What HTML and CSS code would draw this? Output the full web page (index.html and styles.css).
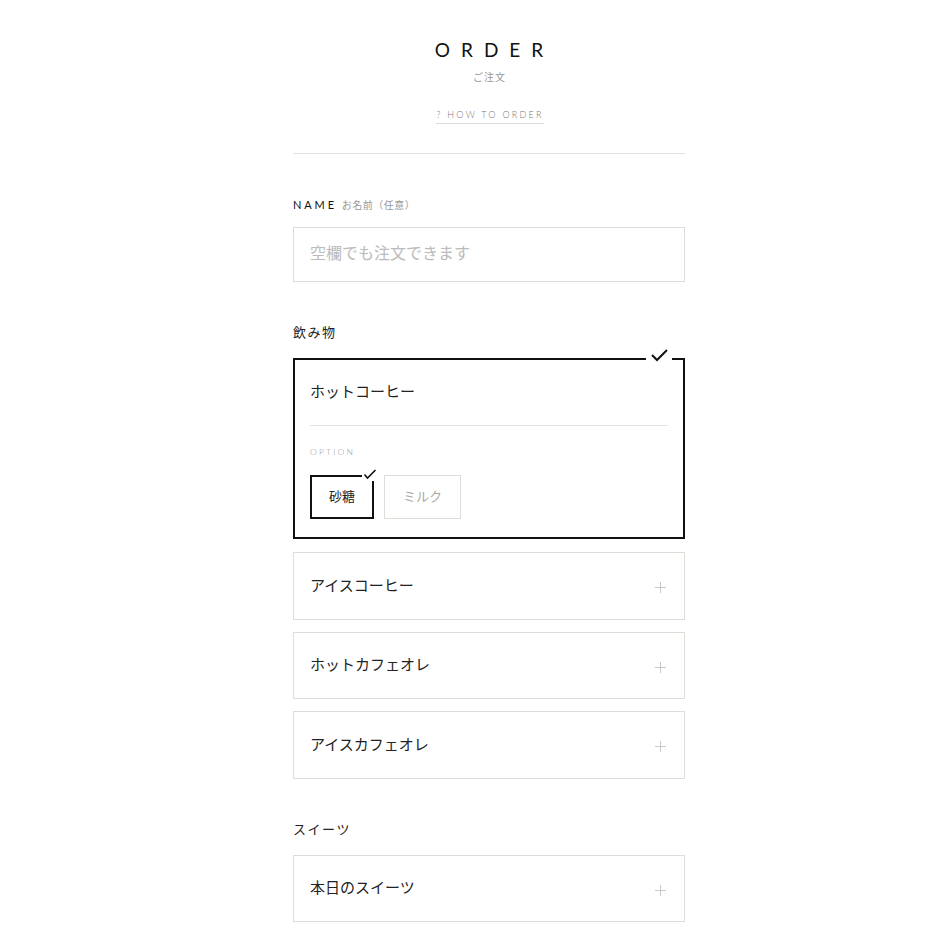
FILE: index.html
```html
<!DOCTYPE html>
<html lang="ja">
<head>
<meta charset="utf-8">
<title>ORDER</title>
<link rel="stylesheet" href="styles.css">
</head>
<body>
<main class="page">
  <header class="head">
    <h1 class="title">ORDER</h1>
    <p class="subtitle">ご注文</p>
    <a class="howto" href="#">? HOW TO ORDER</a>
  </header>
  <hr class="rule">

  <section class="field">
    <div class="label"><span class="label-en">NAME</span><span class="label-ja">お名前（任意）</span></div>
    <input class="input" type="text" placeholder="空欄でも注文できます">
  </section>

  <section class="group">
    <h2 class="group-title">飲み物</h2>
    <div class="card card-selected">
      <span class="card-check"><svg width="18" height="14" viewBox="0 0 18 14"><polyline points="2,7 7,12 17,2" fill="none" stroke="#111" stroke-width="2"/></svg></span>
      <div class="card-name">ホットコーヒー</div>
      <div class="card-divider"></div>
      <div class="option-label">OPTION</div>
      <div class="options">
        <button class="opt opt-on">砂糖<span class="opt-check"><svg width="14" height="11" viewBox="0 0 14 11"><polyline points="1.5,5.5 4.5,9 12.5,1" fill="none" stroke="#111" stroke-width="1.6"/></svg></span></button>
        <button class="opt">ミルク</button>
      </div>
    </div>
    <div class="card"><span class="card-name">アイスコーヒー</span><svg class="plus" width="11" height="11" viewBox="0 0 11 11"><path d="M5.5 0V11M0 5.5H11" stroke="#c8c8c8" stroke-width="1"/></svg></div>
    <div class="card"><span class="card-name">ホットカフェオレ</span><svg class="plus" width="11" height="11" viewBox="0 0 11 11"><path d="M5.5 0V11M0 5.5H11" stroke="#c8c8c8" stroke-width="1"/></svg></div>
    <div class="card"><span class="card-name">アイスカフェオレ</span><svg class="plus" width="11" height="11" viewBox="0 0 11 11"><path d="M5.5 0V11M0 5.5H11" stroke="#c8c8c8" stroke-width="1"/></svg></div>
  </section>

  <section class="group">
    <h2 class="group-title">スイーツ</h2>
    <div class="card"><span class="card-name">本日のスイーツ</span><svg class="plus" width="11" height="11" viewBox="0 0 11 11"><path d="M5.5 0V11M0 5.5H11" stroke="#c8c8c8" stroke-width="1"/></svg></div>
  </section>
</main>
</body>
</html>
```
FILE: styles.css
```css
* { box-sizing: border-box; }
html, body { margin: 0; background: #fff; }
body {
  padding-left: 51px;
  font-family: "Lato", "Noto Sans CJK JP", sans-serif;
  color: #222;
}
.page {
  width: 392px;
  margin: 0 auto;
  padding-top: 40px;
}
.head {
  display: flex;
  flex-direction: column;
  align-items: center;
}
.title {
  margin: 0;
  font-size: 19px;
  line-height: 20px;
  font-weight: 400;
  letter-spacing: 0.58em;
  padding-left: 0.58em;
  color: #111;
}
.subtitle {
  margin: 10px 0 0;
  font-size: 10px;
  line-height: 14px;
  letter-spacing: 1px;
  padding-left: 1px;
  color: #999;
  font-family: "Noto Sans CJK JP", sans-serif;
}
.howto {
  margin-top: 25px;
  font-size: 9px;
  line-height: 12px;
  font-weight: 300;
  letter-spacing: 0.25em;
  padding-bottom: 2px;
  border-bottom: 1px solid #ddd;
  color: #777;
  text-decoration: none;
  margin-right: -0.25em;
}
.rule {
  margin: 29px 0 0;
  border: 0;
  border-top: 1px solid #e3e3e3;
  height: 0;
}
.field { margin-top: 44px; }
.label {
  display: flex;
  align-items: baseline;
  gap: 5px;
  line-height: 14px;
}
.label-en {
  font-size: 11px;
  font-weight: 400;
  letter-spacing: 0.26em;
  color: #111;
}
.label-ja {
  font-family: "Noto Sans CJK JP", sans-serif;
  font-size: 10px;
  letter-spacing: 0.5px;
  color: #999;
}
.input {
  display: block;
  width: 100%;
  height: 55px;
  margin-top: 15px;
  border: 1px solid #deddd8;
  padding: 0 16px 5px;
  font-family: "Noto Sans CJK JP", sans-serif;
  font-size: 16px;
  color: #222;
  outline: none;
  border-radius: 0;
}
.input::placeholder { color: #bbb; }
.group { margin-top: 41px; }
.group-title {
  margin: 0 0 17px;
  font-family: "Noto Sans CJK JP", sans-serif;
  font-size: 13px;
  line-height: 18px;
  font-weight: 400;
  letter-spacing: 0.12em;
  color: #222;
}
.card {
  position: relative;
  display: flex;
  align-items: center;
  justify-content: space-between;
  height: 67.5px;
  border: 1px solid #deddd8;
  padding: 0 18px 0 16px;
  margin-bottom: 12px;
  font-family: "Noto Sans CJK JP", sans-serif;
}
.card .plus { margin-top: 4px; }
.card-name {
  font-size: 15px;
  line-height: 22px;
  color: #222;
  margin-top: -2px;
}
.card-selected {
  display: block;
  height: auto;
  border: 2px solid #111;
  padding: 20px 15px 18px;
  margin-bottom: 13px;
}
.card-selected .card-name { margin-top: 0; }
.card-check {
  position: absolute;
  top: -12px;
  right: 11px;
  width: 26px;
  height: 16px;
  background: #fff;
  display: flex;
  justify-content: center;
  align-items: flex-start;
}
.card-divider {
  margin-top: 23px;
  border-top: 1px solid #e3e3e3;
}
.option-label {
  margin-top: 20px;
  font-family: "Lato", sans-serif;
  font-size: 8.5px;
  font-weight: 300;
  line-height: 12px;
  letter-spacing: 0.26em;
  color: #999;
}
.options {
  display: flex;
  gap: 10px;
  margin-top: 17px;
}
.opt {
  position: relative;
  height: 44px;
  padding: 0 17px 3px;
  background: #fff;
  border: 1px solid #deddd8;
  font-family: "Noto Sans CJK JP", sans-serif;
  font-size: 13px;
  color: #aaa;
  border-radius: 0;
  min-width: 77px;
}
.opt-on {
  border: 2px solid #111;
  color: #222;
  min-width: 64px;
}
.opt-check {
  position: absolute;
  top: -8px;
  right: -6px;
  width: 16px;
  height: 12px;
  background: #fff;
  display: flex;
  justify-content: center;
}
```
